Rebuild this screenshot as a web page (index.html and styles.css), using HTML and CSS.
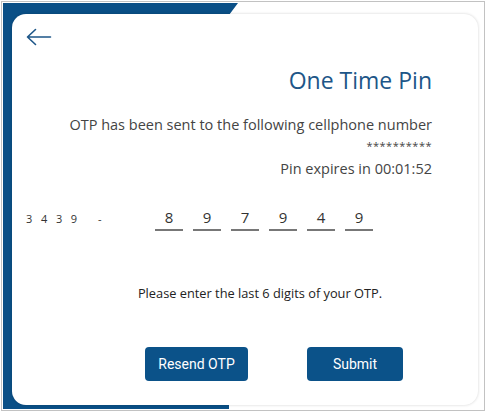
FILE: index.html
```html
<!DOCTYPE html>
<html lang="en">
<head>
    <meta charset="UTF-8">
    <meta name="viewport" content="width=device-width, initial-scale=1.0">
    <title>One Time Pin</title>
    <link rel="stylesheet" href="styles.css">
</head>
<body>

    <div class="frame">
        <div class="accent"></div>
        <div class="card">
            <a class="back" href="#">
                <svg width="26" height="18" viewBox="0 0 26 18">
                    <path d="M1.5 9 H24.5 M9.5 1.5 L1.5 9 L9.5 16.5" fill="none" stroke="#1d5688" stroke-width="1.6" stroke-linecap="round" stroke-linejoin="round"/>
                </svg>
            </a>

            <div class="info">
                <h2>One Time Pin</h2>
                <p>OTP has been sent to the following cellphone number</p>
                <p class="masked">**********</p>
                <p class="expiry">Pin expires in 00:01:52</p>
            </div>

            <div class="otp-row">
                <span class="prefix">3 4 3 9</span>
                <span class="dash">-</span>
                <div class="digits">
                    <span class="digit">8</span>
                    <span class="digit">9</span>
                    <span class="digit">7</span>
                    <span class="digit">9</span>
                    <span class="digit">4</span>
                    <span class="digit">9</span>
                </div>
            </div>

            <p class="hint">Please enter the last 6 digits of your OTP.</p>

            <div class="actions">
                <button type="button" class="resend">Resend OTP</button>
                <button type="submit" class="submit">Submit</button>
            </div>
        </div>
    </div>

</body>
</html>
```

FILE: styles.css
```css
body {
    margin: 0;
    font-family: "Open Sans", "Noto Sans", sans-serif;
    background: #fff;
}
.frame {
    position: relative;
    width: 484px;
    height: 410px;
    margin: 1px 0 0 1px;
    border: 1px solid #c2c2c2;
    box-sizing: border-box;
    padding: 12px 0 0 10px;
}
.accent {
    position: absolute;
    left: 1px;
    top: 1px;
    width: 235px;
    height: 406px;
    background: #0a4f86;
    clip-path: polygon(0 0, 235px 0, 226px 12px, 226px 100%, 0 100%);
}
.card {
    position: relative;
    width: 466px;
    height: 391px;
    box-sizing: border-box;
    background: #fff;
    border-radius: 14px;
    box-shadow: 0 0 3px rgba(0, 0, 0, 0.18);
    padding: 14px 46px 0 14px;
    display: flex;
    flex-direction: column;
}
.back {
    display: block;
    width: 26px;
    height: 18px;
}
.back svg {
    display: block;
}
.info {
    text-align: right;
    color: #444;
}
.info h2 {
    margin: 19px 0 0;
    font-size: 23px;
    font-weight: 400;
    color: #1d5688;
    line-height: 30px;
}
.info p {
    margin: 0;
    font-size: 14.5px;
    line-height: 21px;
}
.info h2 + p {
    margin-top: 19px;
}
.info .masked {
    margin-top: 2px;
    font-size: 11px;
    line-height: 18px;
    letter-spacing: 0.5px;
}
.info .expiry {
    margin-top: 3px;
}
.otp-row {
    display: flex;
    align-items: center;
    margin-top: 27px;
    color: #333;
}
.prefix {
    font-size: 11px;
    letter-spacing: 2.9px;
    width: 72px;
}
.dash {
    font-size: 11px;
    width: 57px;
}
.digits {
    display: flex;
    gap: 10px;
}
.digit {
    width: 28px;
    text-align: center;
    font-size: 15px;
    line-height: 22px;
    border-bottom: 2px solid #777;
    padding-bottom: 1px;
}
.hint {
    margin: 53px 0 0 62px;
    text-align: center;
    font-size: 12.8px;
    color: #222;
}
.actions {
    display: flex;
    margin: 45px 0 0 119px;
    gap: 59px;
}
button {
    font-family: Roboto, "Liberation Sans", sans-serif;
    font-size: 14px;
    color: #fff;
    background: #0b5289;
    border: none;
    border-radius: 4px;
    height: 34px;
    cursor: pointer;
}
.resend {
    width: 103px;
}
.submit {
    width: 96px;
}
```
